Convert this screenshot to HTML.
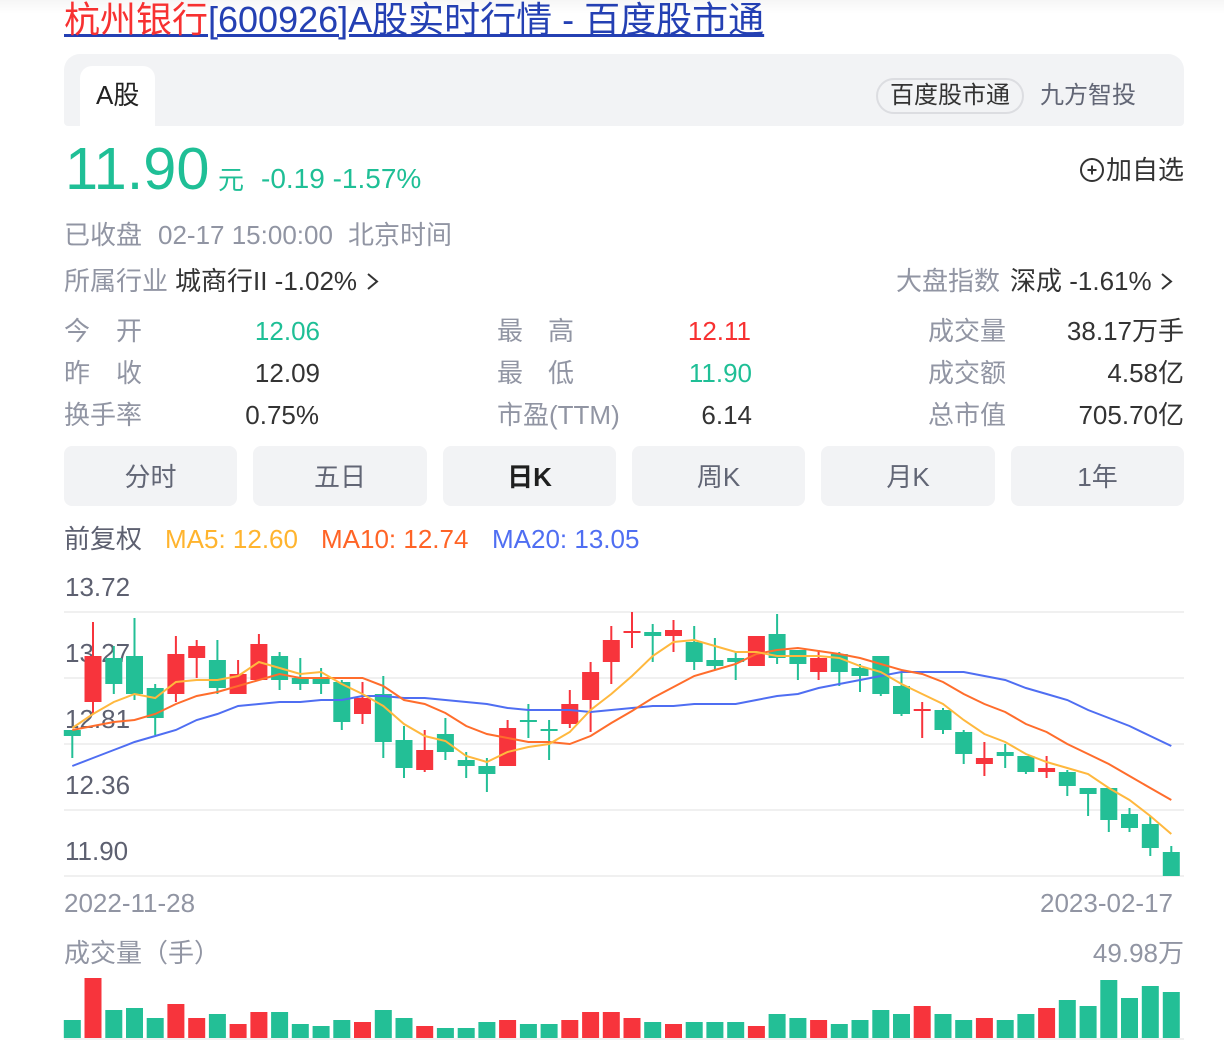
<!DOCTYPE html>
<html lang="zh-CN"><head><meta charset="utf-8"><title>杭州银行[600926]A股实时行情 - 百度股市通</title>
<style>
html,body{margin:0;padding:0;background:#fff}
body{position:relative;width:1224px;height:1058px;overflow:hidden;font-family:"Liberation Sans","Noto Sans CJK SC",sans-serif;font-size:26px;color:#333}
.t{position:absolute;white-space:nowrap;line-height:36px;height:36px}
.r{text-align:right}
.g{color:#9195a3}.k{color:#333}.gr{color:#1fbf96}.re{color:#f73131}.d{color:#5d6070}
.b{position:absolute;top:446px;height:60px;line-height:62px;background:#f2f3f5;border-radius:8px;text-align:center;color:#626675}
.box{position:absolute}
a{text-decoration:underline}
</style></head><body>
<div class="box" style="left:0;top:0;width:1224px;height:14px;background:linear-gradient(#f6f6f6,#fff)"></div>
<div class="t" style="left:64px;top:-2px;font-size:36px;line-height:44px;height:44px;color:#2440b3;text-decoration:underline"><span style="color:#f73131">杭州银行</span>[600926]A股实时行情 - 百度股市通</div>

<div class="box" style="left:64px;top:54px;width:1120px;height:72px;background:#f2f3f5;border-radius:16px 16px 4px 4px"></div>
<div class="box" style="left:80px;top:66px;width:75px;height:60px;background:#fff;border-radius:12px 12px 0 0"></div>
<div class="t" style="left:96px;top:77px;color:#222">A股</div>
<div class="box" style="left:876px;top:78px;width:144px;height:32px;border:2px solid #dcdde1;border-radius:18px"></div>
<div class="t" style="left:890px;top:78px;color:#333;font-size:24px">百度股市通</div>
<div class="t" style="left:1040px;top:78px;color:#626675;font-size:24px">九方智投</div>

<div class="t gr" style="left:65px;top:134px;font-size:59.500px;line-height:70px;height:70px">11.90</div>
<div class="t gr" style="left:218px;top:162px">元</div>
<div class="t gr" style="left:261px;top:161px;font-size:28px">-0.19 -1.57%</div>
<svg class="box" style="left:1079px;top:157px" width="26" height="26" viewBox="0 0 26 26" fill="none" stroke="#333" stroke-width="2"><circle cx="13" cy="13" r="11"/><path d="M8.500 13H17.500M13 8.500V17.500"/></svg>
<div class="t k" style="left:1106px;top:152px">加自选</div>

<div class="t g" style="left:64px;top:217px">已收盘</div>
<div class="t g" style="left:158px;top:217px">02-17 15:00:00</div>
<div class="t g" style="left:348px;top:217px">北京时间</div>

<div class="t g" style="left:64px;top:263px">所属行业</div>
<div class="t k" style="left:175px;top:263px">城商行II -1.02%</div>
<svg class="box" style="left:366px;top:272px" width="14" height="20" fill="none" stroke="#333" stroke-width="2"><path d="M2 2L11 9.500L2 17"/></svg>
<div class="t g" style="left:896px;top:263px">大盘指数</div>
<div class="t k" style="left:1010px;top:263px">深成 -1.61%</div>
<svg class="box" style="left:1160px;top:272px" width="14" height="20" fill="none" stroke="#333" stroke-width="2"><path d="M2 2L11 9.500L2 17"/></svg>

<div class="t g" style="left:64px;top:313px">今</div><div class="t g" style="left:116px;top:313px">开</div>
<div class="t gr r" style="left:200px;width:120px;top:313px">12.06</div>
<div class="t g" style="left:64px;top:355px">昨</div><div class="t g" style="left:116px;top:355px">收</div>
<div class="t k r" style="left:200px;width:120px;top:355px">12.09</div>
<div class="t g" style="left:64px;top:397px">换手率</div>
<div class="t k r" style="left:199px;width:120px;top:397px">0.75%</div>

<div class="t g" style="left:497px;top:313px">最</div><div class="t g" style="left:548px;top:313px">高</div>
<div class="t re r" style="left:631px;width:120px;top:313px">12.11</div>
<div class="t g" style="left:497px;top:355px">最</div><div class="t g" style="left:548px;top:355px">低</div>
<div class="t gr r" style="left:632px;width:120px;top:355px">11.90</div>
<div class="t g" style="left:497px;top:397px">市盈(TTM)</div>
<div class="t k r" style="left:632px;width:120px;top:397px">6.14</div>

<div class="t g" style="left:928px;top:313px">成交量</div>
<div class="t k r" style="left:1034px;width:150px;top:313px">38.17万手</div>
<div class="t g" style="left:928px;top:355px">成交额</div>
<div class="t k r" style="left:1034px;width:150px;top:355px">4.58亿</div>
<div class="t g" style="left:928px;top:397px">总市值</div>
<div class="t k r" style="left:1034px;width:150px;top:397px">705.70亿</div>

<div class="b" style="left:64px;width:173px">分时</div>
<div class="b" style="left:253px;width:174px">五日</div>
<div class="b" style="left:443px;width:173px;color:#1f1f1f;font-weight:bold">日K</div>
<div class="b" style="left:632px;width:173px">周K</div>
<div class="b" style="left:821px;width:174px">月K</div>
<div class="b" style="left:1011px;width:173px">1年</div>

<div class="t d" style="left:64px;top:521px">前复权</div>
<div class="t" style="left:165px;top:521px;color:#ffb42e">MA5: 12.60</div>
<div class="t" style="left:321px;top:521px;color:#ff6426">MA10: 12.74</div>
<div class="t" style="left:492px;top:521px;color:#4f6ef2">MA20: 13.05</div>

<div class="t d" style="left:65px;top:569px">13.72</div>
<div class="t d" style="left:65px;top:635px">13.27</div>
<div class="t d" style="left:65px;top:701px">12.81</div>
<div class="t d" style="left:65px;top:767px">12.36</div>
<div class="t d" style="left:65px;top:833px">11.90</div>

<svg class="box" style="left:0;top:0" width="1224" height="1058" viewBox="0 0 1224 1058" fill="none">
<path stroke="#f0f0f0" stroke-width="2" d="M64 612H1184M64 678H1184M64 744H1184M64 810H1184M64 876H1184M64 1039H1184"/>
<path stroke="#23bf96" stroke-width="2" d="M72.300 730V758M113.800 646V694M134.500 618V700M155.200 684V735M217.400 640V694M279.600 652V690M300.300 658V690M321.100 668V694M341.800 680V730M383.300 676V758M404 726V778M445.400 718V760M466.200 752V778M486.900 758V792M528.400 704V738M549.100 720V760M652.700 624V662M694.200 626V670M714.900 638V670M735.700 652V680M777.100 614V664M797.900 650V680M839.300 652V686M860 664V692M880.800 656V696M901.500 672V716M943 708V734M963.700 730V764M1005.200 744V768M1025.900 756V774M1067.300 770V796M1088.100 788V816M1108.800 788V832M1129.500 808V832M1150.300 816V856M1171.300 846V876"/>
<path stroke="#f7343c" stroke-width="2" d="M93 622V714M175.900 636V702M196.700 640V678M238.100 660V694M258.900 634V680M362.500 682V724M424.700 730V772M507.600 720V766M569.800 690V728M590.600 662V732M611.300 626V684M632 612V648M673.500 620V652M818.600 650V680M922.200 702V738M984.400 742V776M1046.600 756V778"/>
<path stroke="#23bf96" stroke-width="17" d="M72.300 730V736M113.800 658V684M134.500 656V694M155.200 688V718M217.400 660V688M279.600 656V680M300.300 678V684M321.100 678V684M341.800 682V722M383.300 694V742M404 740V768M445.400 734V752M466.200 760V766M486.900 766V774M528.400 720V722M549.100 729V731M652.700 632V636M694.200 642V662M714.900 660V666M735.700 658V662M777.100 634V658M797.900 650V664M839.300 654V672M860 668V676M880.800 656V694M901.500 686V714M943 710V730M963.700 732V754M1005.200 752V756M1025.900 756V772M1067.300 772V786M1088.100 788V794M1108.800 788V820M1129.500 814V828M1150.300 824V848M1171.300 852V876"/>
<path stroke="#f7343c" stroke-width="17" d="M93 656V702M175.900 654V694M196.700 646V658M238.100 674V694M258.900 644V680M362.500 698V714M424.700 750V770M507.600 728V766M569.800 704V724M590.600 672V700M611.300 640V662M632 631V633M673.500 630V636M756.400 636V666M818.600 658V672M922.200 709V711M984.400 758V764M1046.600 768V772"/>
<polyline stroke="#4f6ef2" stroke-width="2" points="72.300,766 93,758 113.800,750 134.500,742 155.200,736 175.900,730 196.700,720 217.400,714 238.100,706 258.900,704 279.600,702 300.300,702 321.100,700 341.800,700 362.500,696 383.300,696 404,698 424.700,698 445.400,700 466.200,702 486.900,704 507.600,708 528.400,710 549.100,710 569.800,710 590.600,712 611.300,710 632,708 652.700,706 673.500,706 694.200,704 714.900,704 735.700,704 756.400,700 777.100,696 797.900,694 818.600,688 839.300,684 860,680 880.800,676 901.500,672 922.200,672 943,672 963.700,672 984.400,676 1005.200,680 1025.900,688 1046.600,694 1067.300,700 1088.100,710 1108.800,718 1129.500,726 1150.300,736 1171.300,746"/>
<polyline stroke="#ff6d2c" stroke-width="2" points="72.300,730 93,726 113.800,722 134.500,720 155.200,714 175.900,704 196.700,696 217.400,692 238.100,686 258.900,680 279.600,674 300.300,678 321.100,678 341.800,678 362.500,678 383.300,686 404,700 424.700,704 445.400,713 466.200,726 486.900,734 507.600,738 528.400,742 549.100,742 569.800,744 590.600,736 611.300,723 632,711 652.700,698 673.500,687 694.200,676 714.900,670 735.700,664 756.400,654 777.100,650 797.900,648 818.600,651 839.300,654 860,658 880.800,664 901.500,670 922.200,674 943,682 963.700,694 984.400,704 1005.200,712 1025.900,724 1046.600,732 1067.300,744 1088.100,754 1108.800,764 1129.500,776 1150.300,788 1171.300,800"/>
<polyline stroke="#ffb83e" stroke-width="2" points="72.300,728 93,714 113.800,702 134.500,694 155.200,698 175.900,682 196.700,680 217.400,680 238.100,676 258.900,662 279.600,668 300.300,674 321.100,672 341.800,684 362.500,694 383.300,706 404,724 424.700,736 445.400,741 466.200,756 486.900,762 507.600,752 528.400,747 549.100,744 569.800,732 590.600,710 611.300,694 632,676 652.700,656 673.500,642 694.200,640 714.900,646 735.700,652 756.400,652 777.100,656 797.900,656 818.600,656 839.300,658 860,666 880.800,672 901.500,684 922.200,694 943,704 963.700,720 984.400,734 1005.200,742 1025.900,754 1046.600,762 1067.300,768 1088.100,774 1108.800,788 1129.500,800 1150.300,816 1171.300,834"/>
<path stroke="#23bf96" stroke-width="17" d="M72.300 1020V1038M113.800 1010V1038M134.500 1008V1038M155.200 1018V1038M217.400 1014V1038M279.600 1012V1038M300.300 1024V1038M321.100 1026V1038M341.800 1020V1038M383.300 1010V1038M404 1018V1038M445.400 1028V1038M466.200 1028V1038M486.900 1022V1038M528.400 1024V1038M549.100 1024V1038M652.700 1022V1038M694.200 1022V1038M714.900 1022V1038M735.700 1022V1038M777.100 1014V1038M797.900 1018V1038M839.300 1024V1038M860 1020V1038M880.800 1010V1038M901.500 1014V1038M943 1014V1038M963.700 1020V1038M1005.200 1020V1038M1025.900 1014V1038M1067.300 1000V1038M1088.100 1006V1038M1108.800 980V1038M1129.500 998V1038M1150.300 986V1038M1171.300 992V1038"/>
<path stroke="#f7343c" stroke-width="17" d="M93 978V1038M175.900 1004V1038M196.700 1018V1038M238.100 1024V1038M258.900 1012V1038M362.500 1022V1038M424.700 1026V1038M507.600 1020V1038M569.800 1020V1038M590.600 1012V1038M611.300 1012V1038M632 1018V1038M673.500 1024V1038M756.400 1026V1038M818.600 1020V1038M922.200 1006V1038M984.400 1018V1038M1046.600 1008V1038"/>
</svg>

<div class="t g" style="left:64px;top:885px">2022-11-28</div>
<div class="t g r" style="left:973px;width:200px;top:885px">2023-02-17</div>
<div class="t g" style="left:64px;top:935px">成交量（手）</div>
<div class="t g r" style="left:984px;width:200px;top:935px">49.98万</div>
</body></html>
